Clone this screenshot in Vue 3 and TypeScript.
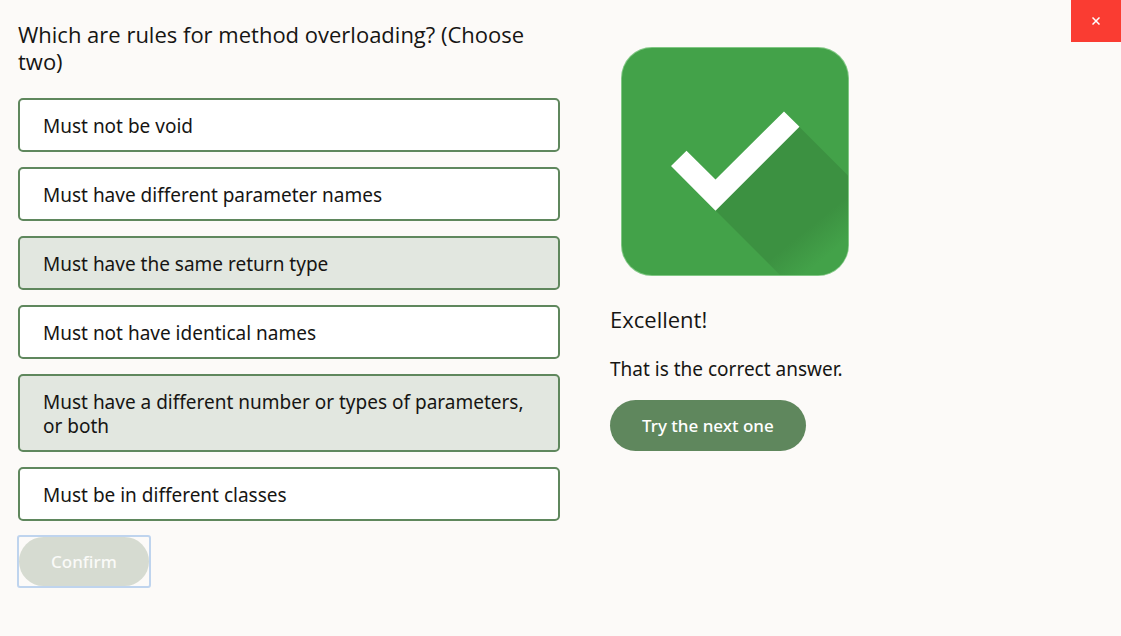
<script setup lang="ts">
import { ref } from 'vue'

interface Answer {
  id: string
  text: string
}

const answers: Answer[] = [
  { id: 'void', text: 'Must not be void' },
  { id: 'param-names', text: 'Must have different parameter names' },
  { id: 'return-type', text: 'Must have the same return type' },
  { id: 'identical', text: 'Must not have identical names' },
  { id: 'param-types', text: 'Must have a different number or types of parameters, or both' },
  { id: 'classes', text: 'Must be in different classes' },
]

const selected = ref<string[]>(['return-type', 'param-types'])
</script>

<template>
  <main class="quiz">
    <form class="question" @submit.prevent>
      <fieldset class="choices">
        <legend class="title">Which are rules for method overloading? (Choose two)</legend>
        <label
          v-for="answer in answers"
          :key="answer.id"
          class="choice"
          :class="{ chosen: selected.includes(answer.id) }"
          :for="answer.id"
        >
          <input :id="answer.id" v-model="selected" class="tick" type="checkbox" :value="answer.id" />
          <span>{{ answer.text }}</span>
        </label>
      </fieldset>
      <div class="focus-frame">
        <button class="pill confirm" type="submit" aria-disabled="true">Confirm</button>
      </div>
    </form>

    <section class="feedback">
      <svg class="badge" viewBox="0 0 250 250" role="img" aria-label="Correct">
        <defs>
          <linearGradient id="shade" gradientUnits="userSpaceOnUse" x1="174" y1="212" x2="195" y2="238">
            <stop offset="0" stop-color="#3c9141" />
            <stop offset="1" stop-color="#43a249" />
          </linearGradient>
          <clipPath id="tile">
            <rect x="12" y="12" width="226" height="227" rx="30" />
          </clipPath>
        </defs>
        <rect x="11" y="11" width="228" height="229" rx="31" fill="#81c784" />
        <rect x="12" y="12" width="226" height="227" rx="30" fill="#43a249" />
        <path d="M105.500 174.500 L189 90.500 L250 151.500 V250 H181 Z" fill="url(#shade)" clip-path="url(#tile)" />
        <path d="M61 130 L76.500 114.700 L105.500 143.500 L174 75.500 L189.500 90.700 L105.500 174.700 Z" fill="#fff" />
      </svg>
      <h2 class="verdict">Excellent!</h2>
      <p class="message">That is the correct answer.</p>
      <button class="pill" type="button">Try the next one</button>
    </section>

    <button class="close" type="button" aria-label="Close">
      <svg class="cross" viewBox="0 0 8 8" aria-hidden="true">
        <path d="M0.500 0.500 L7.500 7.500 M7.500 0.500 L0.500 7.500" stroke="#fff" stroke-width="1.500" />
      </svg>
    </button>
  </main>
</template>

<style>
body {
  margin: 0;
  background: #fcfaf8;
}
</style>

<style scoped>
.quiz {
  position: relative;
  box-sizing: border-box;
  display: grid;
  grid-template-columns: 1fr 1fr;
  align-items: start;
  min-height: 100vh;
  padding-right: 1px;
  color: #161513;
  background: #fcfaf8;
  font-family: "Noto Sans", "Open Sans", sans-serif;
  font-size: 19px;
  line-height: 24px;
}

.question {
  padding: 21px 0 48px 18px;
}

.choices {
  display: flex;
  flex-direction: column;
  gap: 15px;
  min-width: 0;
  margin: 0 0 14px;
  padding: 0;
  border: 0;
}

.title,
.verdict {
  font-family: "Open Sans", "Noto Sans", sans-serif;
  font-size: 22px;
  font-weight: 400;
  line-height: 27px;
}

.title {
  margin: 0 0 23px;
  padding: 0 24px 0 0;
}

.choice {
  display: block;
  padding: 14px 23px 12px;
  border: 2px solid #5f875d;
  border-radius: 5px;
  background: #fff;
  cursor: pointer;
}

.chosen {
  background: #e2e7e0;
}

.tick {
  position: absolute;
  margin: 0;
  opacity: 0;
}

.pill {
  display: block;
  height: 51px;
  padding: 0 32px;
  border: 0;
  border-radius: 26px;
  background: #5f875d;
  color: #fff;
  font-family: inherit;
  font-size: 17px;
  font-weight: 500;
  line-height: 24px;
}

.focus-frame {
  width: fit-content;
  margin-left: -1px;
  border: 2px solid #bfd4ee;
  border-radius: 3px;
}

.confirm {
  height: 49px;
  background: #d6dbd1;
  color: #fafaf8;
}

.feedback {
  padding: 36px 18px 48px 50px;
}

.badge {
  display: block;
  width: 250px;
  height: 250px;
}

.verdict {
  margin: 20px 0 24px;
}

.message {
  margin: 0 0 19px;
}

.close {
  position: absolute;
  top: 0;
  right: 0;
  display: flex;
  align-items: center;
  justify-content: center;
  width: 50px;
  height: 42px;
  padding: 0;
  border: 0;
  background: #fa3c32;
}

.cross {
  width: 8px;
  height: 8px;
}
</style>
